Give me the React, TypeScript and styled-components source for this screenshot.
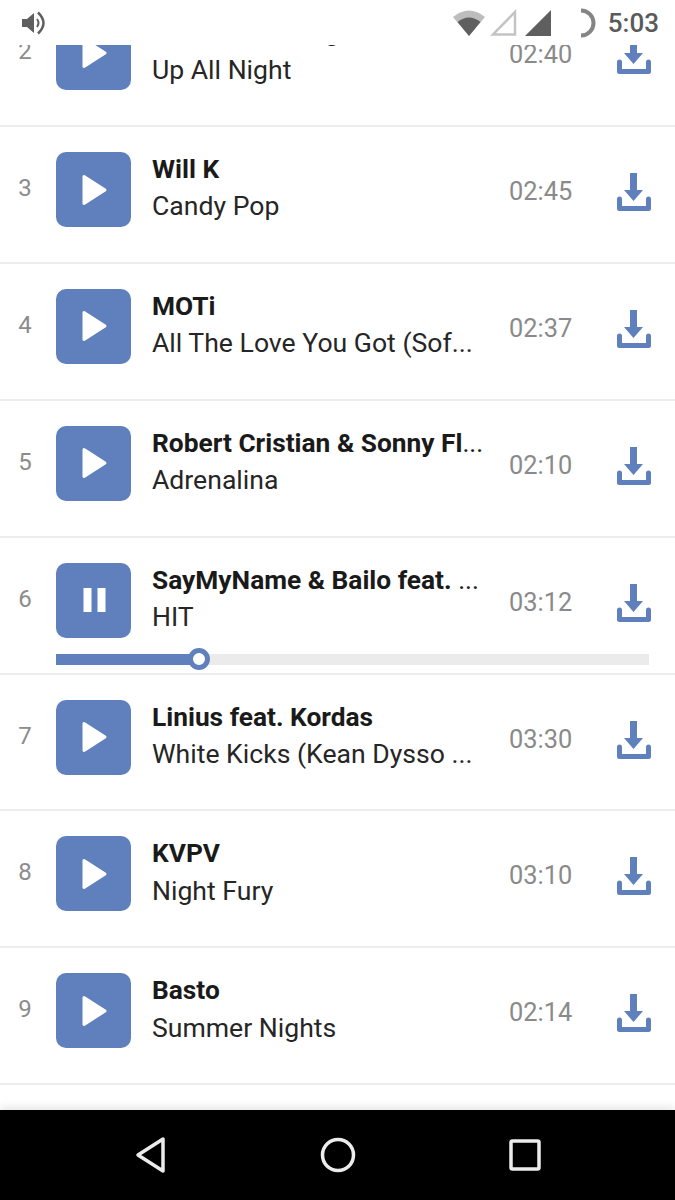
import React from 'react';
import styled, { createGlobalStyle } from 'styled-components';

const GlobalStyle = createGlobalStyle`
  html, body {
    margin: 0;
    padding: 0;
    background: #fff;
    font-family: Roboto, "Liberation Sans", sans-serif;
  }
`;

const Screen = styled.div`
  width: 675px;
  height: 1200px;
  display: flex;
  flex-direction: column;
  overflow: hidden;
  background: #fff;
`;

const StatusBar = styled.div`
  position: relative;
  z-index: 2;
  flex: none;
  height: 45px;
  display: flex;
  align-items: center;
  padding: 0 16px 0 21px;
  background: #fff;
  color: #5c5c5c;
`;

const StatusIcons = styled.div`
  margin-left: auto;
  display: flex;
  align-items: center;
  height: 45px;
`;

const Clock = styled.span`
  margin-left: 9px;
  font-size: 26px;
  font-weight: 500;
  color: #5a5a5a;
`;

const Tracks = styled.div`
  flex: 1;
  min-height: 0;
  overflow: hidden;
`;

const TrackList = styled.div`
  margin-top: -54.8px;
`;

const Row = styled.div`
  box-sizing: border-box;
  height: 136.86px;
  padding-top: 25px;
  border-bottom: 2px solid #ececec;
`;

const RowMain = styled.div`
  display: flex;
  align-items: flex-start;
  height: 75px;
`;

const Index = styled.div`
  width: 50px;
  margin-right: 6px;
  margin-top: 18px;
  text-align: center;
  font-size: 24px;
  line-height: 36px;
  color: #8c8c8c;
`;

const Cover = styled.div`
  flex: none;
  width: 75px;
  height: 75px;
  border-radius: 10px;
  background: #5f80bd;
  display: flex;
  align-items: center;
  justify-content: center;
`;

const Info = styled.div`
  width: 335px;
  margin: -2px 0 0 21px;
`;

const Title = styled.div`
  font-size: 26.3px;
  font-weight: 700;
  line-height: 38px;
  color: #1a1a1a;
  white-space: nowrap;
  overflow: hidden;
`;

const Subtitle = styled(Title)`
  margin-top: -0.6px;
  font-size: 26.6px;
  font-weight: 400;
  color: #262626;
`;

const Dots = styled.span`
  font-weight: 400;
`;

const Duration = styled.div`
  width: 63px;
  margin: 21px 0 0 22px;
  font-size: 25.4px;
  line-height: 36px;
  color: #8a8a8a;
  white-space: nowrap;
`;

const DownloadButton = styled.div`
  margin: 21px 0 0 44px;
  display: flex;
`;

const Progress = styled.div`
  position: relative;
  height: 11px;
  margin: 16px 26px 0 56px;
  background: #ebebeb;
`;

const ProgressFill = styled.div`
  height: 100%;
  background: #5f80bd;
`;

const ProgressKnob = styled.div`
  position: absolute;
  top: 50%;
  width: 22px;
  height: 22px;
  box-sizing: border-box;
  border: 5px solid #5f80bd;
  border-radius: 50%;
  background: #fff;
  transform: translate(-50%, -50%);
`;

const NavBar = styled.div`
  position: relative;
  z-index: 2;
  flex: none;
  height: 90px;
  background: #000;
  box-shadow: 0 -2px 9px rgba(0, 0, 0, 0.12);
  display: flex;
  align-items: center;
  padding: 0 0 0 134px;
`;

const NavSlot = styled.div<{ $gap: number }>`
  display: flex;
  margin-right: ${props => props.$gap}px;
`;

const PlayIcon = () => (
  <svg width="28" height="34" viewBox="0 0 28 34">
    <path d="M4 3.5 L25 17 L4 30.5 Z" fill="#fff" stroke="#fff" strokeWidth="3" strokeLinejoin="round" />
  </svg>
);

const PauseIcon = () => (
  <svg width="24" height="24" viewBox="0 0 24 24">
    <rect x="1.5" y="0" width="8" height="24" fill="#fff" />
    <rect x="15.5" y="0" width="8" height="24" fill="#fff" />
  </svg>
);

const DownloadIcon = () => (
  <svg width="36" height="40" viewBox="0 0 36 40">
    <path d="M14 0 H21 V17 H27 L17.5 28 L8 17 H14 Z" fill="#5f80bd" />
    <path d="M3.5 26 V35.5 H32.5 V26" fill="none" stroke="#5f80bd" strokeWidth="5" strokeLinejoin="round" strokeLinecap="round" />
  </svg>
);

const SpeakerIcon = () => (
  <svg width="26" height="26" viewBox="0 0 26 26">
    <path d="M1 9 H6 L13 3 V23 L6 17 H1 Z" fill="#5f5f5f" />
    <path d="M16 9 Q19 13 16 17" fill="none" stroke="#5f5f5f" strokeWidth="2" />
    <path d="M17 2.5 Q28 13 17 23.5" fill="none" stroke="#5f5f5f" strokeWidth="2.5" />
  </svg>
);

const WifiIcon = () => (
  <svg width="34" height="28" viewBox="0 0 34 28">
    <path d="M1 8 Q17 -5 33 8 L17 27 Z" fill="#bdbdbd" />
    <path d="M5.5 13 Q17 4 28.5 13 L17 27 Z" fill="#5f5f5f" />
  </svg>
);

const SignalEmptyIcon = () => (
  <svg width="28" height="28" viewBox="0 0 28 28" style={{ marginLeft: 4 }}>
    <path d="M25 3 V25.5 H3 Z" fill="none" stroke="#c4c4c4" strokeWidth="2.5" />
  </svg>
);

const SignalFullIcon = () => (
  <svg width="28" height="28" viewBox="0 0 28 28" style={{ marginLeft: 6 }}>
    <path d="M27 1 V27 H1 Z" fill="#5f5f5f" />
  </svg>
);

const BatteryIcon = () => (
  <svg width="20" height="30" viewBox="0 0 20 30" style={{ marginLeft: 27 }}>
    <path d="M2 2.5 A12.5 12.5 0 0 1 2 27.5" fill="none" stroke="#858585" strokeWidth="4" />
  </svg>
);

interface Track {
  index: number;
  artist: string;
  title: string;
  duration: string;
  artistCut?: boolean;
  titleCut?: boolean;
  playing?: boolean;
  progress?: number;
}

const tracks: Track[] = [
  { index: 2, artist: 'Tim & Dan Long', title: 'Up All Night', duration: '02:40' },
  { index: 3, artist: 'Will K', title: 'Candy Pop', duration: '02:45' },
  { index: 4, artist: 'MOTi', title: 'All The Love You Got (Sof', titleCut: true, duration: '02:37' },
  { index: 5, artist: 'Robert Cristian & Sonny Fl', artistCut: true, title: 'Adrenalina', duration: '02:10' },
  { index: 6, artist: 'SayMyName & Bailo feat. ', artistCut: true, title: 'HIT', duration: '03:12', playing: true, progress: 143 },
  { index: 7, artist: 'Linius feat. Kordas', title: 'White Kicks (Kean Dysso ', titleCut: true, duration: '03:30' },
  { index: 8, artist: 'KVPV', title: 'Night Fury', duration: '03:10' },
  { index: 9, artist: 'Basto', title: 'Summer Nights', duration: '02:14' },
];

const App: React.FC = () => (
  <Screen>
    <GlobalStyle />
    <StatusBar>
      <SpeakerIcon />
      <StatusIcons>
        <WifiIcon />
        <SignalEmptyIcon />
        <SignalFullIcon />
        <BatteryIcon />
        <Clock>5:03</Clock>
      </StatusIcons>
    </StatusBar>

    <Tracks>
      <TrackList>
        {tracks.map(track => (
          <Row key={track.index}>
            <RowMain>
              <Index>{track.index}</Index>
              <Cover>{track.playing ? <PauseIcon /> : <PlayIcon />}</Cover>
              <Info>
                <Title>
                  {track.artist}
                  {track.artistCut && <Dots>...</Dots>}
                </Title>
                <Subtitle>
                  {track.title}
                  {track.titleCut && <Dots>...</Dots>}
                </Subtitle>
              </Info>
              <Duration>{track.duration}</Duration>
              <DownloadButton>
                <DownloadIcon />
              </DownloadButton>
            </RowMain>
            {track.progress !== undefined && (
              <Progress>
                <ProgressFill style={{ width: track.progress }} />
                <ProgressKnob style={{ left: track.progress }} />
              </Progress>
            )}
          </Row>
        ))}
      </TrackList>
    </Tracks>

    <NavBar>
      <NavSlot $gap={154}>
        <svg width="32" height="38" viewBox="0 0 32 38">
          <path d="M29 3 V35 L4 19 Z" fill="none" stroke="#ececec" strokeWidth="3.5" strokeLinejoin="round" />
        </svg>
      </NavSlot>
      <NavSlot $gap={153}>
        <svg width="36" height="36" viewBox="0 0 36 36">
          <circle cx="18" cy="18" r="15.5" fill="none" stroke="#ececec" strokeWidth="3.5" />
        </svg>
      </NavSlot>
      <NavSlot $gap={0}>
        <svg width="32" height="32" viewBox="0 0 32 32">
          <rect x="2" y="2" width="28" height="28" rx="1.5" fill="none" stroke="#ececec" strokeWidth="3.5" />
        </svg>
      </NavSlot>
    </NavBar>
  </Screen>
);

export default App;
